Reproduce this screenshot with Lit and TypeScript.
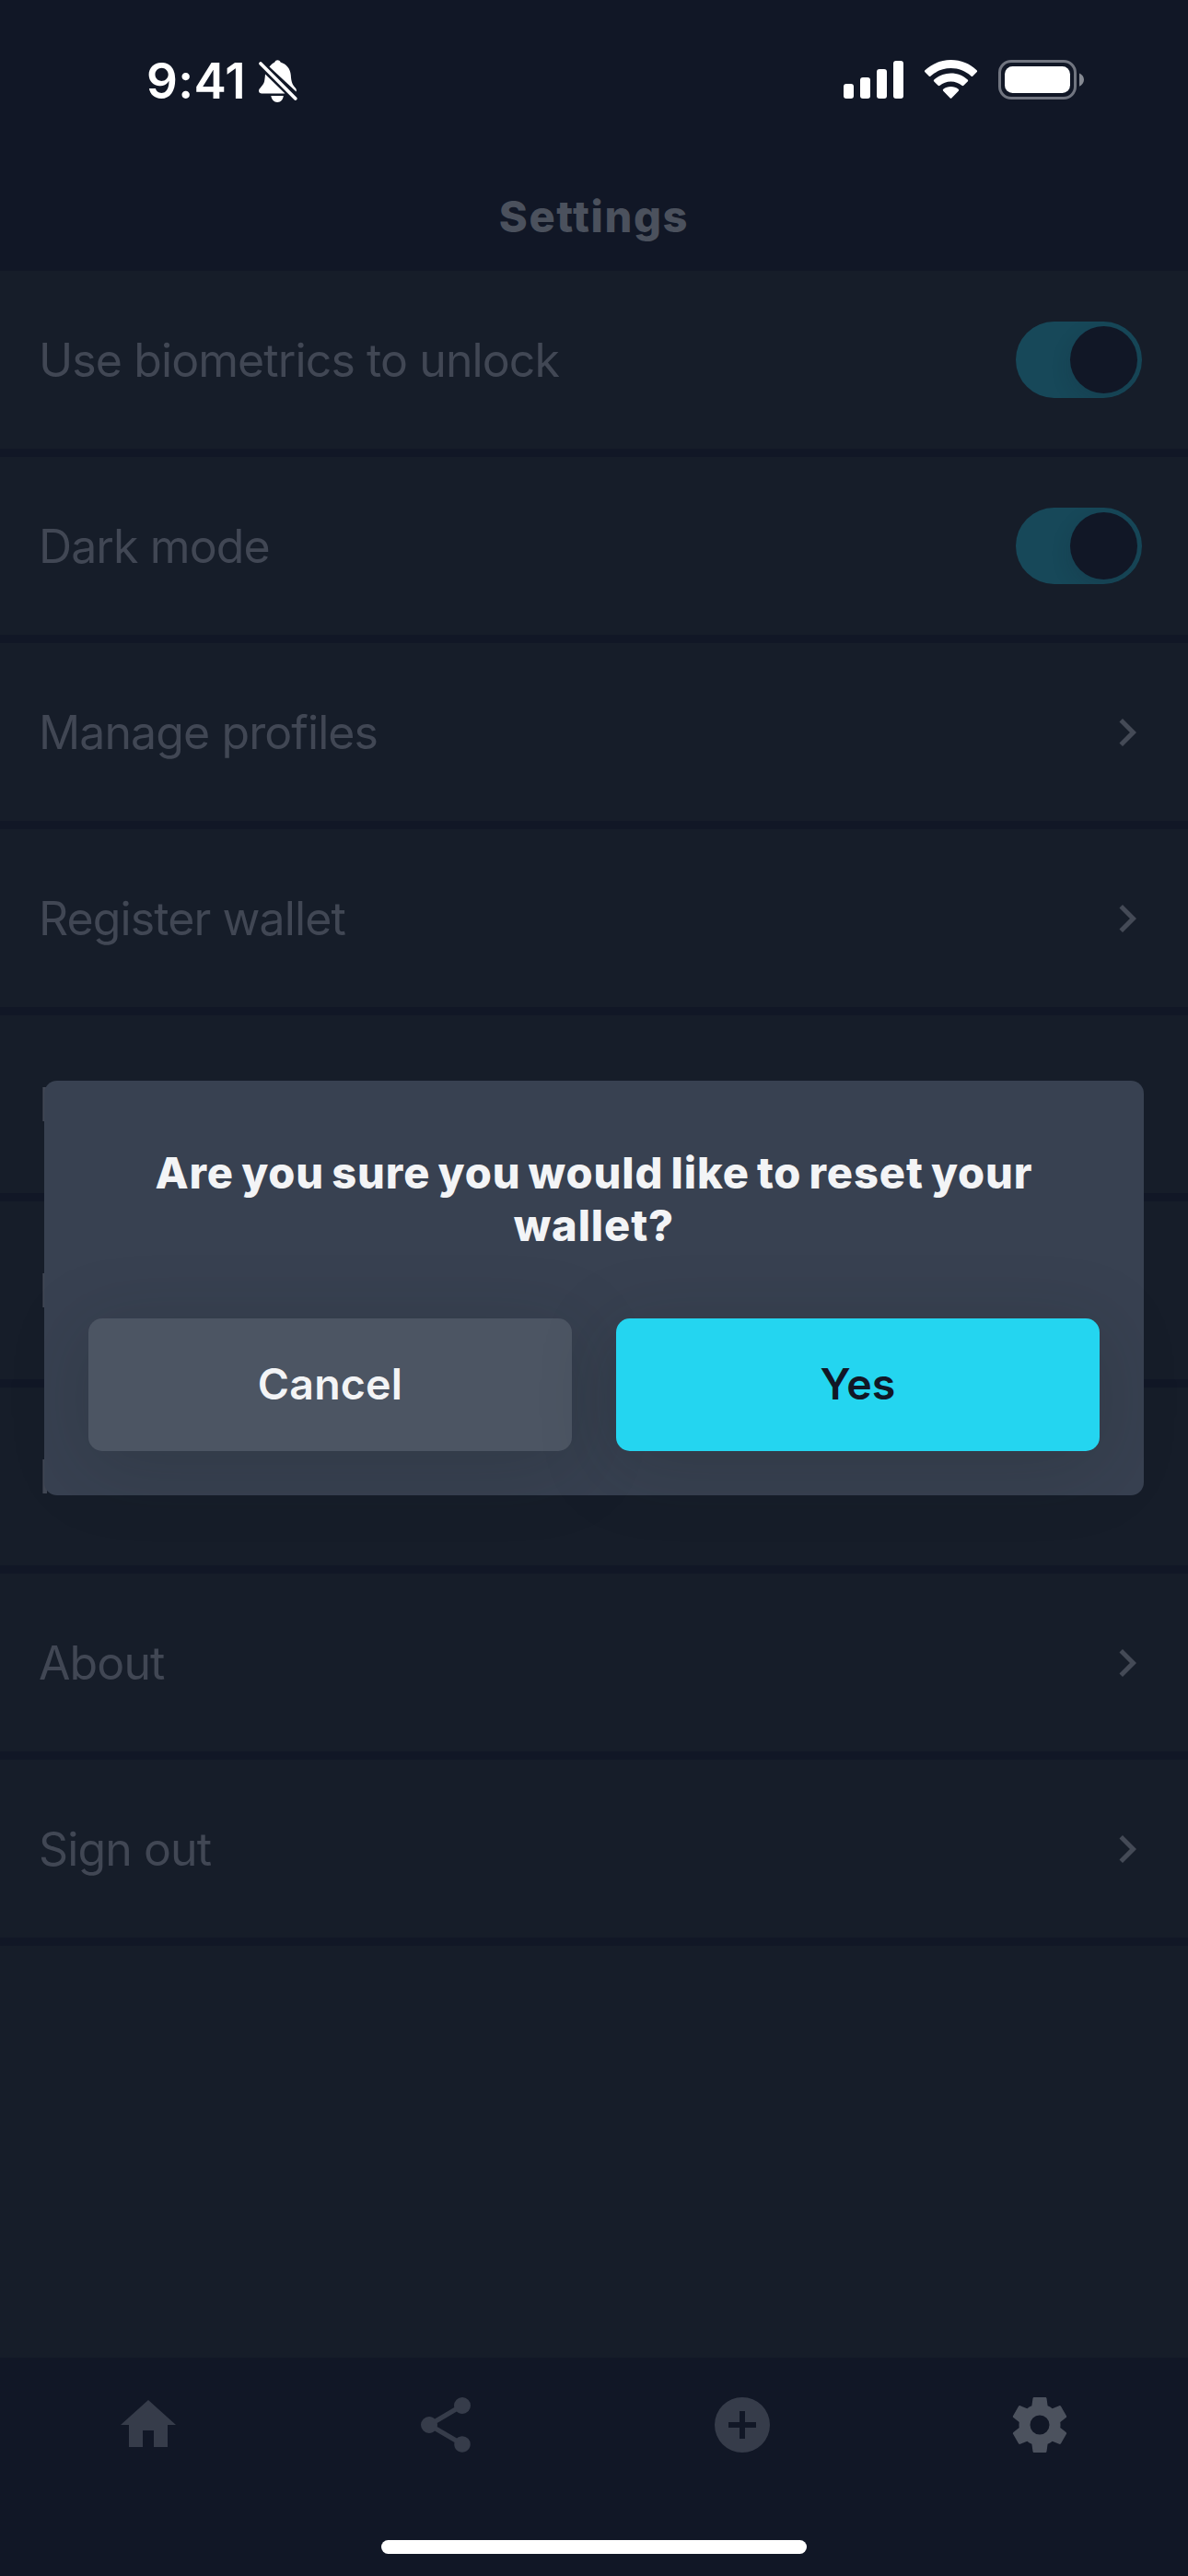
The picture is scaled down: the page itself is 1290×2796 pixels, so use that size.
import { LitElement, html, svg, css } from "lit";
import { customElement } from "lit/decorators.js";

type Row = { label: string; kind: "toggle" | "link" | "plain" };

const ROWS: Row[] = [
  { label: "Use biometrics to unlock", kind: "toggle" },
  { label: "Dark mode", kind: "toggle" },
  { label: "Manage profiles", kind: "link" },
  { label: "Register wallet", kind: "link" },
  { label: "R", kind: "plain" },
  { label: "R", kind: "plain" },
  { label: "R", kind: "plain" },
  { label: "About", kind: "link" },
  { label: "Sign out", kind: "link" },
];

const TABS = [
  { name: "home", path: "M10,20V14H14V20H19V12H22L12,3L2,12H5V20H10Z" },
  {
    name: "share",
    path: "M18,16.08C17.24,16.08 16.56,16.38 16.04,16.85L8.91,12.7C8.96,12.47 9,12.24 9,12C9,11.76 8.96,11.53 8.91,11.3L15.96,7.19C16.5,7.69 17.21,8 18,8A3,3 0 0,0 21,5A3,3 0 0,0 18,2A3,3 0 0,0 15,5C15,5.24 15.04,5.47 15.09,5.7L8.04,9.81C7.5,9.31 6.79,9 6,9A3,3 0 0,0 3,12A3,3 0 0,0 6,15C6.79,15 7.5,14.69 8.04,14.19L15.16,18.34C15.11,18.55 15.08,18.77 15.08,19C15.08,20.61 16.39,21.91 18,21.91C19.61,21.91 20.92,20.61 20.92,19A2.92,2.92 0 0,0 18,16.08Z",
  },
  {
    name: "add",
    path: "M17,13H13V17H11V13H7V11H11V7H13V11H17M12,2A10,10 0 0,0 2,12A10,10 0 0,0 12,22A10,10 0 0,0 22,12A10,10 0 0,0 12,2Z",
  },
  {
    name: "settings",
    path: "M12,15.5A3.5,3.5 0 0,1 8.5,12A3.5,3.5 0 0,1 12,8.5A3.5,3.5 0 0,1 15.5,12A3.5,3.5 0 0,1 12,15.5M19.43,12.97C19.47,12.65 19.5,12.33 19.5,12C19.5,11.67 19.47,11.34 19.43,11L21.54,9.37C21.73,9.22 21.78,8.95 21.66,8.73L19.66,5.27C19.54,5.05 19.27,4.96 19.05,5.05L16.56,6.05C16.04,5.66 15.5,5.32 14.87,5.07L14.5,2.42C14.46,2.18 14.25,2 14,2H10C9.75,2 9.54,2.18 9.5,2.42L9.13,5.07C8.5,5.32 7.96,5.66 7.44,6.05L4.95,5.05C4.73,4.96 4.46,5.05 4.34,5.27L2.34,8.73C2.21,8.95 2.27,9.22 2.46,9.37L4.57,11C4.53,11.34 4.5,11.67 4.5,12C4.5,12.33 4.53,12.65 4.57,12.97L2.46,14.63C2.27,14.78 2.21,15.05 2.34,15.27L4.34,18.73C4.46,18.95 4.73,19.03 4.95,18.95L7.44,17.94C7.96,18.34 8.5,18.68 9.13,18.93L9.5,21.58C9.54,21.82 9.75,22 10,22H14C14.25,22 14.46,21.82 14.5,21.58L14.87,18.93C15.5,18.67 16.04,18.34 16.56,17.94L19.05,18.95C19.27,19.03 19.54,18.95 19.66,18.73L21.66,15.27C21.78,15.05 21.73,14.78 21.54,14.63L19.43,12.97Z",
  },
];

@customElement("status-bar")
class StatusBar extends LitElement {
  static styles = css`
    :host {
      display: flex;
      justify-content: space-between;
      height: 112px;
      box-sizing: border-box;
      padding: 60px 112px 0 159px;
      color: #fff;
      font-family: Inter, "Liberation Sans", sans-serif;
    }
    .left,
    .right {
      display: flex;
      align-items: flex-start;
    }
    .time {
      font-size: 53px;
      font-weight: 600;
      line-height: 56px;
      width: 120px;
      letter-spacing: 0.3px;
      white-space: nowrap;
    }
    svg {
      display: block;
      fill: #fff;
    }
  `;

  render() {
    return html`
      <div class="left">
        <div class="time">9:41</div>
        <svg width="48" height="56" viewBox="279 60 48 56">
          <path
            d="M292.5 72.5C294.5 69.8 296.8 68.3 298.3 67.5C299 66 300 65.2 301.3 65.2C302.8 65.2 304 66 304.6 67.5C311 69.5 315.3 74.5 315.8 81.5C316.2 89 317.8 92.5 320.8 95.5C322 96.8 322 98 321.6 99.5Z"
          />
          <path
            d="M288 80.5L309.5 101.5H284C281.5 101.5 280.6 99.4 281.2 97.6C282.2 95 286 92.5 287 88.5C287.6 86 287.8 83 288 80.5Z"
          />
          <path d="M294.3 104H307.8C307.3 108 305 111 301.2 111C297.4 111 295 108 294.3 104Z" />
          <path d="M283 69L320.8 107" fill="none" stroke="#fff" stroke-width="3.8" stroke-linecap="round" />
        </svg>
      </div>
      <div class="right">
        <svg width="264" height="52" viewBox="914 60 264 52">
          <rect x="916" y="91" width="11" height="16" rx="3" />
          <rect x="934" y="84" width="11" height="23" rx="3" />
          <rect x="952" y="75" width="11" height="32" rx="3" />
          <rect x="970" y="66" width="11" height="41" rx="3" />
          <path
            d="M1032.5 65C1021.5 65 1011.7 69.3 1004.4 76.2Q1003.4 77.2 1004.4 78.2L1008.6 82.5Q1009.6 83.5 1010.6 82.5C1016.4 77.2 1024 74 1032.5 74C1041 74 1048.6 77.2 1054.4 82.5Q1055.4 83.5 1056.4 82.5L1060.6 78.2Q1061.6 77.2 1060.6 76.2C1053.3 69.3 1043.5 65 1032.5 65Z"
          />
          <path
            d="M1032.5 79.5C1025.4 79.5 1019.1 82.2 1014.3 86.4Q1013.3 87.4 1014.3 88.4L1018.6 92.8Q1019.6 93.6 1020.6 92.8C1023.8 90.1 1027.9 88.4 1032.5 88.4C1037.1 88.4 1041.2 90.1 1044.4 92.8Q1045.4 93.6 1046.4 92.8L1050.7 88.4Q1051.7 87.4 1050.7 86.4C1045.9 82.2 1039.6 79.5 1032.5 79.5Z"
          />
          <path
            d="M1032.5 94C1029.4 94 1026.5 95 1024.3 96.7Q1023.2 97.7 1024.2 98.7L1031.5 106.3Q1032.5 107.3 1033.5 106.3L1040.8 98.7Q1041.8 97.7 1040.7 96.7C1038.5 95 1035.6 94 1032.5 94Z"
          />
          <rect x="1085.5" y="66.5" width="82" height="40" rx="12.5" fill="none" stroke="#717580" stroke-width="3" />
          <rect x="1091" y="72" width="71" height="29" rx="8.5" />
          <path d="M1172 79.5C1175 80.8 1177 83.4 1177 86.6C1177 89.8 1175 92.4 1172 93.7Z" fill="#868a93" />
        </svg>
      </div>
    `;
  }
}

@customElement("settings-row")
class SettingsRow extends LitElement {
  static properties = { label: {}, kind: {} };
  declare label: string;
  declare kind: string;

  static styles = css`
    :host {
      display: flex;
      align-items: center;
      justify-content: space-between;
      height: 202px;
      box-sizing: border-box;
      border-bottom: 9px solid #111726;
      background: #161d29;
      color: #414754;
      font-family: Inter, "Liberation Sans", sans-serif;
    }
    .label {
      padding-left: 42px;
      font-size: 50px;
      line-height: 60px;
      letter-spacing: -0.9px;
      white-space: nowrap;
    }
    .toggle {
      display: flex;
      justify-content: flex-end;
      align-items: center;
      box-sizing: border-box;
      width: 137px;
      height: 83px;
      margin-right: 50px;
      padding-right: 5px;
      border-radius: 42px;
      background: #174859;
      overflow: hidden;
    }
    .thumb {
      width: 73px;
      height: 73px;
      border-radius: 50%;
      background: #111726;
      box-shadow: 0 8px 22px rgba(17, 23, 38, 0.16);
    }
    .chevron {
      display: block;
      width: 60px;
      height: 60px;
      margin-right: 36px;
      fill: #444a56;
    }
  `;

  render() {
    return html`
      <div class="label">${this.label}</div>
      ${this.kind === "toggle"
        ? html`<div class="toggle"><div class="thumb"></div></div>`
        : this.kind === "link"
          ? html`<svg class="chevron" viewBox="0 0 24 24">
              ${svg`<path d="M8.59,16.58L13.17,12L8.59,7.41L10,6L16,12L10,18L8.59,16.58Z" />`}
            </svg>`
          : null}
    `;
  }
}

@customElement("confirm-dialog")
class ConfirmDialog extends LitElement {
  static styles = css`
    :host {
      display: block;
      box-sizing: border-box;
      width: 1194px;
      height: 450px;
      padding: 71px 48px 48px;
      border-radius: 14px;
      background: #384151;
      color: #f3f4f6;
      font-family: Inter, "Liberation Sans", sans-serif;
    }
    .message {
      height: 114px;
      font-size: 47px;
      font-weight: 800;
      line-height: 57px;
      text-align: center;
      letter-spacing: 0.9px;
      word-spacing: -3px;
    }
    .line {
      display: block;
      white-space: nowrap;
    }
    .actions {
      display: grid;
      grid-template-columns: 1fr 1fr;
      gap: 48px;
      margin-top: 73px;
    }
    .button {
      display: flex;
      align-items: center;
      justify-content: center;
      height: 144px;
      box-sizing: border-box;
      padding-bottom: 2px;
      border-radius: 15px;
      background: #4c5563;
      box-shadow: 0 15px 84px rgba(24, 32, 34, 0.22);
      font-size: 46.5px;
      font-weight: 600;
      letter-spacing: 0.2px;
    }
    .primary {
      background: #24d5f0;
      color: #111726;
    }
  `;

  render() {
    return html`
      <div class="message">
        <span class="line">Are you sure you would like to reset your</span>
        <span class="line">wallet?</span>
      </div>
      <div class="actions">
        <div class="button">Cancel</div>
        <div class="button primary">Yes</div>
      </div>
    `;
  }
}

@customElement("app-root")
class AppRoot extends LitElement {
  static styles = css`
    :host {
      position: relative;
      display: flex;
      flex-direction: column;
      width: 1290px;
      height: 2796px;
      overflow: hidden;
      background: #111726;
    }
    .title {
      height: 182px;
      box-sizing: border-box;
      padding-top: 93px;
      color: #4b515d;
      font: 800 47px/60px Inter, "Liberation Sans", sans-serif;
      letter-spacing: 1.6px;
      text-align: center;
    }
    .list {
      flex: 1;
      background: #161d29;
    }
    .tabs {
      display: grid;
      grid-template-columns: repeat(4, 1fr);
      justify-items: center;
      height: 198px;
      padding-top: 37px;
      box-sizing: border-box;
    }
    .icon {
      width: 72px;
      height: 72px;
      fill: #363c4a;
    }
    .icon.settings {
      fill: #4c525e;
    }
    .home-indicator {
      width: 462px;
      height: 15px;
      margin: 0 auto 24px;
      border-radius: 8px;
      background: #fff;
    }
    .dialog {
      position: absolute;
      left: 48px;
      top: 1173px;
    }
  `;

  render() {
    return html`
      <status-bar></status-bar>
      <div class="title">Settings</div>
      <div class="list">
        ${ROWS.map((r) => html`<settings-row .label=${r.label} .kind=${r.kind}></settings-row>`)}
      </div>
      <div class="tabs">
        ${TABS.map(
          (t) => html`<svg class="icon ${t.name}" viewBox="0 0 24 24">${svg`<path d=${t.path} />`}</svg>`,
        )}
      </div>
      <div class="home-indicator"></div>
      <confirm-dialog class="dialog"></confirm-dialog>
    `;
  }
}
